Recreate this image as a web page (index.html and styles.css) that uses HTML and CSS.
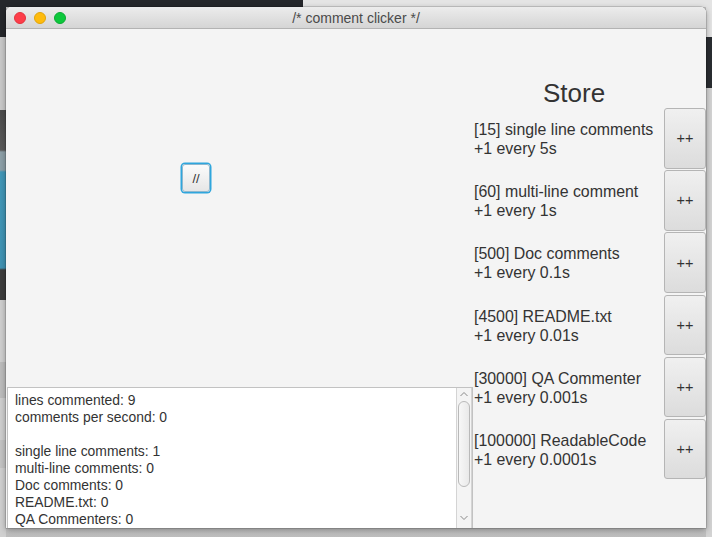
FILE: index.html
```html
<!DOCTYPE html>
<html>
<head>
<meta charset="utf-8">
<title>comment clicker</title>
<link rel="stylesheet" href="styles.css">
</head>
<body>
<div class="desktop">
  <div class="window">
    <div class="titlebar">
      <div class="lights">
        <span class="light red"></span>
        <span class="light yellow"></span>
        <span class="light green"></span>
      </div>
      <div class="title">/* comment clicker */</div>
      <div class="spacer"></div>
    </div>
    <div class="content">
      <div class="main">
        <div class="stage">
          <button class="click">//</button>
        </div>
        <div class="log">
          <div class="log-text">
            <div>lines commented: 9</div>
            <div>comments per second: 0</div>
            <div>&nbsp;</div>
            <div>single line comments: 1</div>
            <div>multi-line comments: 0</div>
            <div>Doc comments: 0</div>
            <div>README.txt: 0</div>
            <div>QA Commenters: 0</div>
          </div>
          <div class="scrollbar">
            <svg class="arrow" width="10" height="6" viewBox="0 0 10 6"><polyline points="1.5,5 5,1.5 8.5,5" fill="none" stroke="#8a8a8a" stroke-width="1"/></svg>
            <div class="thumb"></div>
            <svg class="arrow" width="10" height="6" viewBox="0 0 10 6"><polyline points="1.5,1 5,4.5 8.5,1" fill="none" stroke="#8a8a8a" stroke-width="1"/></svg>
          </div>
        </div>
      </div>
      <div class="store">
        <h1 class="store-title">Store</h1>
        <div class="item">
          <div class="item-label">[15] single line comments<br>+1 every 5s</div>
          <button class="buy">++</button>
        </div>
        <div class="item">
          <div class="item-label">[60] multi-line comment<br>+1 every 1s</div>
          <button class="buy">++</button>
        </div>
        <div class="item">
          <div class="item-label">[500] Doc comments<br>+1 every 0.1s</div>
          <button class="buy">++</button>
        </div>
        <div class="item">
          <div class="item-label">[4500] README.txt<br>+1 every 0.01s</div>
          <button class="buy">++</button>
        </div>
        <div class="item">
          <div class="item-label">[30000] QA Commenter<br>+1 every 0.001s</div>
          <button class="buy">++</button>
        </div>
        <div class="item">
          <div class="item-label">[100000] ReadableCode<br>+1 every 0.0001s</div>
          <button class="buy">++</button>
        </div>
      </div>
    </div>
  </div>
</div>
</body>
</html>
```
FILE: styles.css
```css
html, body {
  margin: 0;
  padding: 0;
}

body {
  width: 712px;
  height: 537px;
  overflow: hidden;
  font-family: "Liberation Sans", Arial, sans-serif;
  color: #333;
  background-color: #c4c4c4;
  background-image:
    linear-gradient(to right, #25272b 0, #25272b 303px, #e4e4e4 303px),
    linear-gradient(to bottom, #25272b 0, #25272b 37px, #c9c9c9 37px, #c9c9c9 110px, #4b4b4b 110px, #5a5a5a 150px, #8da0a8 152px, #8da0a8 170px, #4097b8 172px, #3f93b4 268px, #3c3c3c 270px, #3c3c3c 300px, #cfcfcf 300px, #cfcfcf 362px, #bdbdbd 362px, #bdbdbd 398px, #cfcfcf 398px, #cfcfcf 440px, #c4c4c4 440px, #c4c4c4 468px, #d0d0d0 468px),
    linear-gradient(to bottom, #e4e4e4 0, #e4e4e4 37px, #2a2d31 37px, #2a2d31 88px, #d3d3d3 88px),
    linear-gradient(#c6c6c6, #bdbdbd);
  background-size: 100% 7px, 6px 100%, 6px 100%, 100% 9px;
  background-position: top left, top left, top right, bottom left;
  background-repeat: no-repeat;
}

.desktop {
  padding: 7px 0 0 6px;
}

.window {
  width: 700px;
  height: 521px;
  background: #f4f4f4;
  border-radius: 5px 5px 0 0;
  box-shadow: 0 0 0 0.5px rgba(0, 0, 0, 0.25), 0 2px 6px rgba(0, 0, 0, 0.35);
  display: flex;
  flex-direction: column;
  overflow: hidden;
}

.titlebar {
  height: 21px;
  flex: none;
  border-bottom: 1px solid #b3b3b3;
  background: linear-gradient(#ececec, #d5d5d5);
  border-radius: 5px 5px 0 0;
  display: grid;
  grid-template-columns: 1fr auto 1fr;
  align-items: center;
}

.lights {
  display: flex;
  gap: 8px;
  padding-left: 8px;
  padding-top: 1px;
}

.light {
  width: 12px;
  height: 12px;
  border-radius: 50%;
  box-sizing: border-box;
}

.red { background: #fd3d49; border: 0.5px solid #e2333d; }
.yellow { background: #febb0d; border: 0.5px solid #e0a40a; }
.green { background: #0dc83c; border: 0.5px solid #0baa33; }

.title {
  font-size: 14px;
  color: #4a4a4a;
  padding-top: 1px;
}

.content {
  flex: 1;
  display: flex;
  min-height: 0;
}

.main {
  width: 467px;
  flex: none;
  display: flex;
  flex-direction: column;
}

.stage {
  flex: 1;
  padding: 135px 0 0 176px;
}

.click {
  width: 28px;
  height: 28px;
  padding: 0;
  margin: 0;
  box-sizing: border-box;
  border: 1px solid #8fb8cf;
  border-radius: 3px;
  background: linear-gradient(#fbfbfb, #e6e6e6);
  box-shadow: 0 0 0 1.5px #2fa6dd;
  font-family: "Liberation Sans", Arial, sans-serif;
  font-size: 13px;
  color: #333;
}

.log {
  height: 141px;
  flex: none;
  margin-left: 1px;
  box-sizing: border-box;
  border: 1px solid #c2c2c2;
  border-bottom: none;
  background: #fff;
  display: flex;
  overflow: hidden;
}

.log-text {
  flex: 1;
  padding: 4px 0 0 7px;
  font-size: 13.9px;
  line-height: 17px;
  color: #333;
}

.scrollbar {
  width: 16px;
  flex: none;
  box-sizing: border-box;
  border-left: 1px solid #d4d4d4;
  border-right: 1px solid #d4d4d4;
  background: #f4f4f4;
  display: flex;
  flex-direction: column;
  align-items: center;
  padding-top: 3px;
}

.arrow {
  flex: none;
}

.thumb {
  width: 12px;
  height: 86px;
  margin: 4px 0 28px;
  box-sizing: border-box;
  border: 1px solid #b9b9b9;
  border-radius: 6px;
  background: linear-gradient(to right, #f7f7f7, #e9e9e9);
}

.store {
  flex: 1;
  display: flex;
  flex-direction: column;
}

.store-title {
  margin: 49px 0 0 0;
  padding-left: 70px;
  font-size: 26px;
  font-weight: normal;
  line-height: 30px;
  color: #333;
}

.item {
  height: 62.2px;
  display: flex;
  align-items: flex-start;
}

.item-label {
  flex: 1;
  align-self: center;
  padding-left: 1px;
  padding-bottom: 0;
  font-size: 15.9px;
  line-height: 19px;
  color: #333;
  white-space: nowrap;
}

.buy {
  width: 42px;
  height: 60.5px;
  margin: 0;
  padding: 0;
  box-sizing: border-box;
  border: 1px solid #b5b5b5;
  border-radius: 3px;
  background: linear-gradient(#f0f0f0, #dcdcdc);
  font-family: "Liberation Sans", Arial, sans-serif;
  font-size: 14.5px;
  color: #333;
}
```
